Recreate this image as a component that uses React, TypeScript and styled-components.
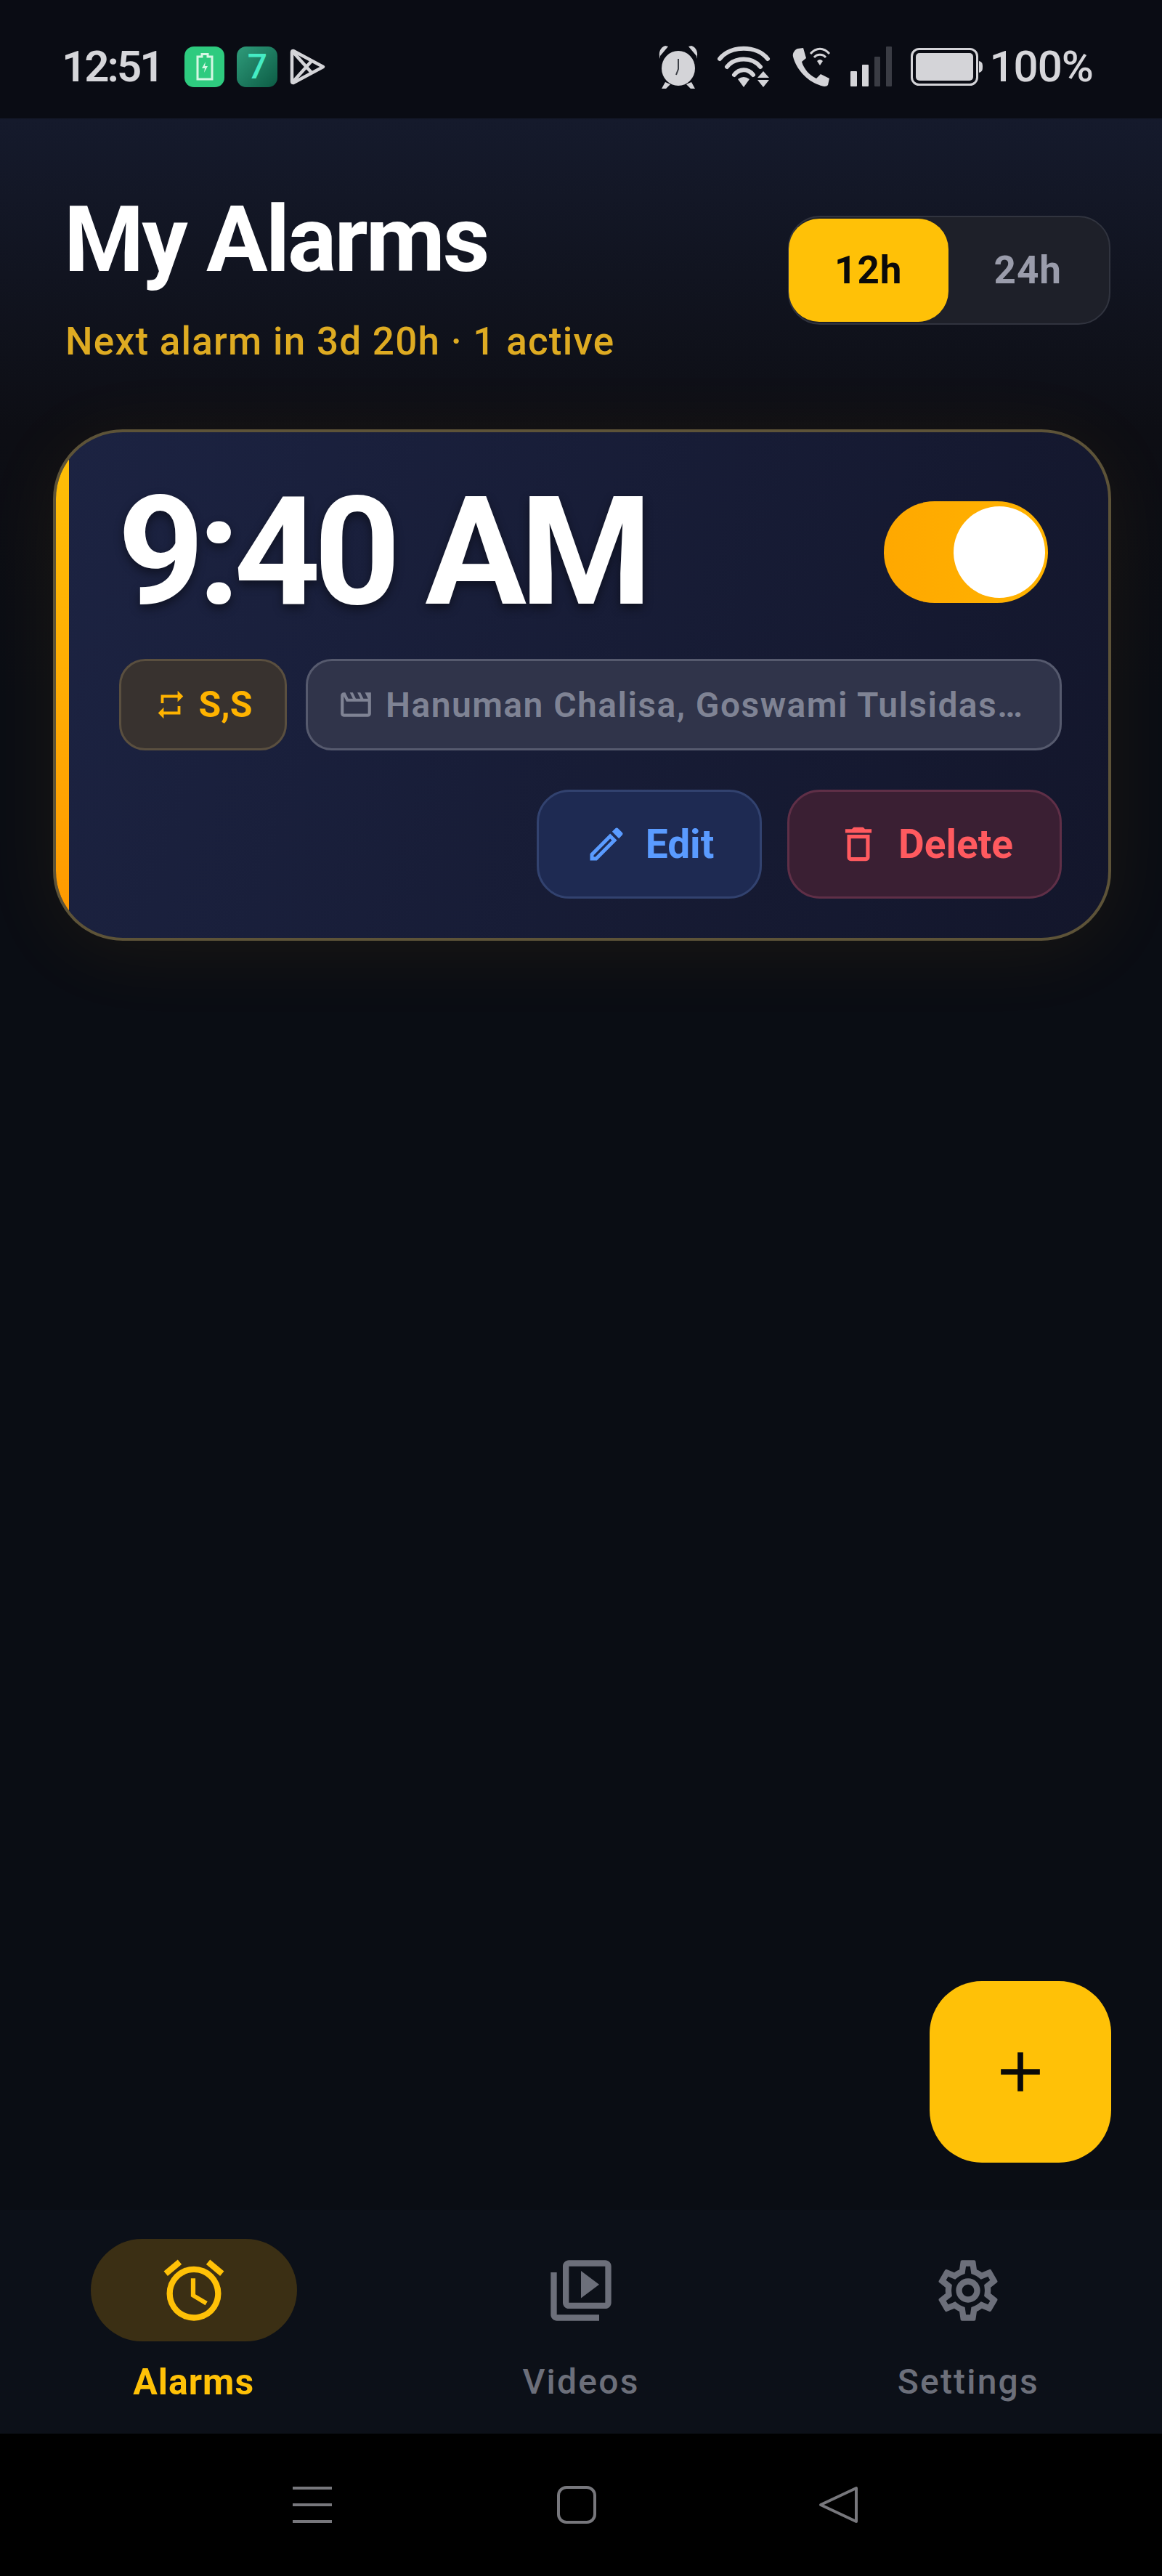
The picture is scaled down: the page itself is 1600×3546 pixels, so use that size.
import React from 'react';
import styled, { createGlobalStyle } from 'styled-components';
import {
  MdAdd,
  MdOutlineAlarm,
  MdOutlineDelete,
  MdOutlineEdit,
  MdOutlineMovie,
  MdOutlineSettings,
  MdOutlineVideoLibrary,
  MdRepeat,
} from 'react-icons/md';

const GlobalStyle = createGlobalStyle`
  html, body {
    margin: 0;
    padding: 0;
    background: #0a0d14;
  }
  * {
    box-sizing: border-box;
  }
`;

const AlarmGlyph = () => (
  <svg width='56' height='62' viewBox='0 0 56 62' fill='#d4d4d8'>
    <path d='M3 20 C0 12 3 4 10 2 L14 3 L3 16 Z M53 20 C56 12 53 4 46 2 L42 3 L53 16 Z' />
    <ellipse cx='28' cy='33' rx='23' ry='24' />
    <path d='M10 52 L5 61 L11 61 L17 55 Z M46 52 L51 61 L45 61 L39 55 Z' />
    <path d='M28 20 L28 34 L25 42' fill='none' stroke='#3c3f46' strokeWidth='2' />
  </svg>
);

const WifiGlyph = () => (
  <svg width='76' height='60' viewBox='0 0 76 60' fill='none' stroke='#d4d4d8' strokeWidth='6' strokeLinecap='round'>
    <path d='M3 19 C18 0 54 0 69 19' />
    <path d='M13 30 C24 16 48 16 59 30' />
    <path d='M23 41 C30 32 42 32 49 41' />
    <path d='M28 47 Q36 41 44 47 L36 58 Z' fill='#d4d4d8' stroke='none' />
    <path d='M63 36 L71 45 L55 45 Z M55 48 L71 48 L63 58 Z' fill='#d4d4d8' stroke='none' />
  </svg>
);

const CallGlyph = () => (
  <svg width='54' height='56' viewBox='0 0 54 56' fill='#d4d4d8'>
    <path d='M8 3 L16 2 L20 16 L14 21 C17 31 24 39 34 44 L40 38 L52 44 L50 53 C48 56 42 55 38 53 C20 47 6 30 2 14 C1 9 4 5 8 3 Z' />
    <path d='M26 10 C34 1 44 1 52 10' fill='none' stroke='#d4d4d8' strokeWidth='3' />
    <path d='M31 15 C35 10 43 10 47 15' fill='none' stroke='#d4d4d8' strokeWidth='3' />
    <path d='M35 20 Q39 16 43 20 L39 26 Z' />
  </svg>
);

const SignalGlyph = () => (
  <svg width='58' height='56' viewBox='0 0 58 56'>
    <rect x='1' y='34' width='9' height='21' rx='1' fill='#d4d4d8' />
    <rect x='17' y='25' width='9' height='30' rx='1' fill='#d4d4d8' />
    <rect x='34' y='14' width='8' height='41' rx='1' fill='#3a3c44' />
    <rect x='50' y='0' width='8' height='55' rx='1' fill='#3a3c44' />
  </svg>
);

const BatteryGlyph = () => (
  <svg width='100' height='52' viewBox='0 0 100 52'>
    <rect x='1.5' y='1.5' width='90' height='49' rx='10' fill='none' stroke='#d4d4d8' strokeWidth='3' />
    <rect x='7' y='7' width='79' height='38' rx='5' fill='#d4d4d8' />
    <path d='M94 18 C98 19 99 21 99 26 C99 31 98 33 94 34 Z' fill='#d4d4d8' />
  </svg>
);

const ChargeGlyph = () => (
  <svg width='24' height='38' viewBox='0 0 24 38' fill='none' stroke='#d5f7e4' strokeWidth='3'>
    <path d='M8 1.5 H16 V5 H22 V36 H2 V5 H8 Z' />
    <path d='M13 12 L8 21 H12 L11 27 L16 18 H12 Z' fill='#d5f7e4' stroke='none' />
  </svg>
);

const PlayGlyph = () => (
  <svg width='50' height='52' viewBox='0 0 50 52' fill='none' stroke='#d4d4d8' strokeWidth='4.5' strokeLinejoin='round'>
    <path d='M5 4 L46 26 L5 48 Q3 48 3 46 V6 Q3 4 5 4 Z' />
    <path d='M4 5 L30 34 M4 47 L30 18' />
  </svg>
);

const App: React.FC = () => (
  <>
    <GlobalStyle />
    <Screen>
      <StatusBar>
        <NotifyGroup>
          <Clock>12:51</Clock>
          <BatteryTile>
            <ChargeGlyph />
          </BatteryTile>
          <SevenTile>7</SevenTile>
          <PlayGlyph />
        </NotifyGroup>
        <SystemGroup>
          <AlarmGlyph />
          <WifiGlyph />
          <CallGlyph />
          <SignalGlyph />
          <BatteryGlyph />
          <Percent>100%</Percent>
        </SystemGroup>
      </StatusBar>

      <Main>
        <Header>
          <div>
            <Title>My Alarms</Title>
            <Subtitle>Next alarm in 3d 20h · 1 active</Subtitle>
          </div>
          <FormatSwitch>
            <FormatOption $active>12h</FormatOption>
            <FormatOption>24h</FormatOption>
          </FormatSwitch>
        </Header>

        <AlarmCard>
          <TimeRow>
            <TimeText>9:40 AM</TimeText>
            <Toggle>
              <ToggleKnob />
            </Toggle>
          </TimeRow>
          <PillRow>
            <RepeatPill>
              <MdRepeat size={46} />
              S,S
            </RepeatPill>
            <MediaPill>
              <MdOutlineMovie size={50} />
              Hanuman Chalisa, Goswami Tulsidas…
            </MediaPill>
          </PillRow>
          <ActionRow>
            <EditButton>
              <MdOutlineEdit size={60} />
              Edit
            </EditButton>
            <DeleteButton>
              <MdOutlineDelete size={62} />
              Delete
            </DeleteButton>
          </ActionRow>
        </AlarmCard>

        <AddButton>
          <MdAdd size={92} />
        </AddButton>
      </Main>

      <BottomNav>
        <NavItem>
          <NavIcon $active>
            <MdOutlineAlarm size={100} />
          </NavIcon>
          <NavLabel $active>Alarms</NavLabel>
        </NavItem>
        <NavItem>
          <NavIcon>
            <MdOutlineVideoLibrary size={100} />
          </NavIcon>
          <NavLabel>Videos</NavLabel>
        </NavItem>
        <NavItem>
          <NavIcon>
            <MdOutlineSettings size={100} />
          </NavIcon>
          <NavLabel>Settings</NavLabel>
        </NavItem>
      </BottomNav>

      <SystemNav>
        <svg width='54' height='52' viewBox='0 0 54 52' stroke='#77777c' strokeWidth='4'>
          <path d='M0 3 H54 M0 26 H54 M0 49 H54' />
        </svg>
        <svg width='54' height='52' viewBox='0 0 54 52' fill='none' stroke='#77777c' strokeWidth='4'>
          <rect x='2' y='2' width='50' height='48' rx='11' />
        </svg>
        <svg width='54' height='52' viewBox='0 0 54 52' fill='none' stroke='#77777c' strokeWidth='4' strokeLinejoin='round'>
          <path d='M52 3 V49 L3 26 Z' />
        </svg>
      </SystemNav>
    </Screen>
  </>
);

const Screen = styled.div`
  width: 1600px;
  height: 3546px;
  display: flex;
  flex-direction: column;
  background: #0a0d14;
  font-family: Roboto, 'Liberation Sans', sans-serif;
  overflow: hidden;
`;

const StatusBar = styled.div`
  height: 163px;
  flex: none;
  display: flex;
  align-items: center;
  justify-content: space-between;
  padding: 20px 95px 0 85px;
  background: #0a0c14;
  color: #d6d6da;
`;

const NotifyGroup = styled.div`
  display: flex;
  align-items: center;
  gap: 17px;
`;

const SystemGroup = styled.div`
  display: flex;
  align-items: center;
  gap: 26px;
`;

const Clock = styled.span`
  font-size: 60px;
  font-weight: 600;
  letter-spacing: -3px;
  margin-right: 14px;
`;

const BatteryTile = styled.span`
  width: 55px;
  height: 56px;
  display: flex;
  align-items: center;
  justify-content: center;
  border-radius: 13px;
  background: #2ecb7f;
`;

const SevenTile = styled.span`
  width: 56px;
  height: 56px;
  display: flex;
  align-items: center;
  justify-content: center;
  border-radius: 13px;
  background: linear-gradient(135deg, #2f9c7b, #0c5b44);
  color: #45ecc4;
  font-size: 48px;
  font-weight: 500;
`;

const Percent = styled.span`
  font-size: 60px;
  font-weight: 500;
  letter-spacing: -1px;
  margin-left: -17px;
`;

const Main = styled.div`
  flex: 1;
  position: relative;
  background: linear-gradient(180deg, #151a2c 0, #0d0e14 430px, #0a0d14 800px);
`;

const Header = styled.header`
  display: flex;
  justify-content: space-between;
  align-items: flex-start;
  padding: 104px 71px 0 90px;
  margin-bottom: 91px;
`;

const Title = styled.h1`
  margin: 0 0 47px -2px;
  font-size: 126px;
  line-height: 126px;
  font-weight: 700;
  letter-spacing: -3px;
  color: #ffffff;
`;

const Subtitle = styled.p`
  margin: 0;
  font-size: 53px;
  line-height: 60px;
  font-weight: 500;
  letter-spacing: 1.25px;
  color: #deab22;
`;

const FormatSwitch = styled.div`
  width: 444px;
  height: 150px;
  margin-top: 30px;
  display: flex;
  padding: 2px;
  border: 2px solid #31343f;
  border-radius: 44px;
  background: #1e2029;
`;

const FormatOption = styled.div<{ $active?: boolean }>`
  width: 220px;
  display: flex;
  align-items: center;
  justify-content: center;
  margin-left: ${(p) => (p.$active ? '-3px' : '0')};
  border-radius: 42px;
  background: ${(p) => (p.$active ? '#ffc107' : 'transparent')};
  color: ${(p) => (p.$active ? '#0a0a0a' : '#9a9cab')};
  font-size: 53px;
  font-weight: 700;
  letter-spacing: 1px;
`;

const AlarmCard = styled.section`
  position: relative;
  height: 704px;
  margin: 0 70px 0 73px;
  padding: 95px 64px 0 87px;
  border: 4px solid #5d5338;
  border-radius: 96px;
  overflow: hidden;
  background: linear-gradient(110deg, #1c2342, #13162b);
  box-shadow: 0 14px 110px rgba(255, 170, 0, 0.07);
  &::before {
    content: '';
    position: absolute;
    top: 0;
    bottom: 0;
    left: 0;
    width: 18px;
    background: linear-gradient(180deg, #ffc107, #ff9800);
  }
`;

const TimeRow = styled.div`
  height: 140px;
  display: flex;
  align-items: center;
  justify-content: space-between;
  padding-right: 19px;
`;

const TimeText = styled.div`
  margin-left: -2px;
  font-size: 208px;
  line-height: 140px;
  font-weight: 700;
  letter-spacing: -9px;
  color: #ffffff;
  text-shadow: 0 6px 14px rgba(0, 0, 0, 0.45);
`;

const Toggle = styled.div`
  width: 226px;
  height: 140px;
  display: flex;
  align-items: center;
  justify-content: flex-end;
  padding-right: 4px;
  border-radius: 70px;
  background: linear-gradient(90deg, #ffa800, #ffb300);
`;

const ToggleKnob = styled.div`
  width: 126px;
  height: 126px;
  border-radius: 50%;
  background: #ffffff;
`;

const PillRow = styled.div`
  display: flex;
  gap: 26px;
  margin-top: 77px;
`;

const Pill = styled.div`
  height: 126px;
  display: flex;
  align-items: center;
  border-radius: 36px;
  white-space: nowrap;
`;

const RepeatPill = styled(Pill)`
  width: 231px;
  flex: none;
  justify-content: center;
  gap: 16px;
  border: 3px solid #5a4f3f;
  background: #38322f;
  color: #ffb300;
  font-size: 50px;
  font-weight: 700;
`;

const MediaPill = styled(Pill)`
  flex: 1;
  gap: 16px;
  padding-left: 41px;
  border: 3px solid #565a6e;
  background: #30344a;
  color: #7f8394;
  font-size: 48px;
  font-weight: 600;
  letter-spacing: 1.45px;
`;

const ActionRow = styled.div`
  display: flex;
  justify-content: flex-end;
  gap: 35px;
  margin-top: 54px;
`;

const ActionButton = styled.button`
  height: 150px;
  display: flex;
  align-items: center;
  justify-content: center;
  gap: 24px;
  padding: 0;
  border-radius: 45px;
  font-family: inherit;
  font-size: 55px;
  font-weight: 700;
`;

const EditButton = styled(ActionButton)`
  width: 310px;
  border: 3px solid #32426f;
  background: #1e2a52;
  color: #5a9bff;
`;

const DeleteButton = styled(ActionButton)`
  width: 378px;
  border: 3px solid #5f2f47;
  background: #3a1f33;
  color: #ff5a5f;
`;

const AddButton = styled.button`
  position: absolute;
  top: 2564px;
  right: 70px;
  width: 250px;
  height: 250px;
  display: flex;
  align-items: center;
  justify-content: center;
  padding: 0;
  border: none;
  border-radius: 72px;
  background: #ffc107;
  color: #0a0a0a;
`;

const BottomNav = styled.nav`
  height: 308px;
  flex: none;
  display: grid;
  grid-template-columns: repeat(3, 1fr);
  padding-top: 40px;
  background: #0c1018;
`;

const NavItem = styled.div`
  display: flex;
  flex-direction: column;
  align-items: center;
`;

const NavIcon = styled.div<{ $active?: boolean }>`
  width: 284px;
  height: 141px;
  display: flex;
  align-items: center;
  justify-content: center;
  border-radius: 71px;
  background: ${(p) => (p.$active ? '#3b2f14' : 'transparent')};
  color: ${(p) => (p.$active ? '#ffc107' : '#6c6f7a')};
`;

const NavLabel = styled.span<{ $active?: boolean }>`
  margin-top: 26px;
  font-size: ${(p) => (p.$active ? '50px' : '48px')};
  line-height: 60px;
  font-weight: ${(p) => (p.$active ? 700 : 500)};
  letter-spacing: ${(p) => (p.$active ? '1px' : '2.2px')};
  color: ${(p) => (p.$active ? '#ffc107' : '#6c6f7a')};
`;

const SystemNav = styled.div`
  height: 196px;
  flex: none;
  display: flex;
  justify-content: center;
  gap: 310px;
  padding: 72px 16px 0 0;
  background: #000000;
  svg:last-child {
    margin-left: -4px;
  }
`;

export default App;
